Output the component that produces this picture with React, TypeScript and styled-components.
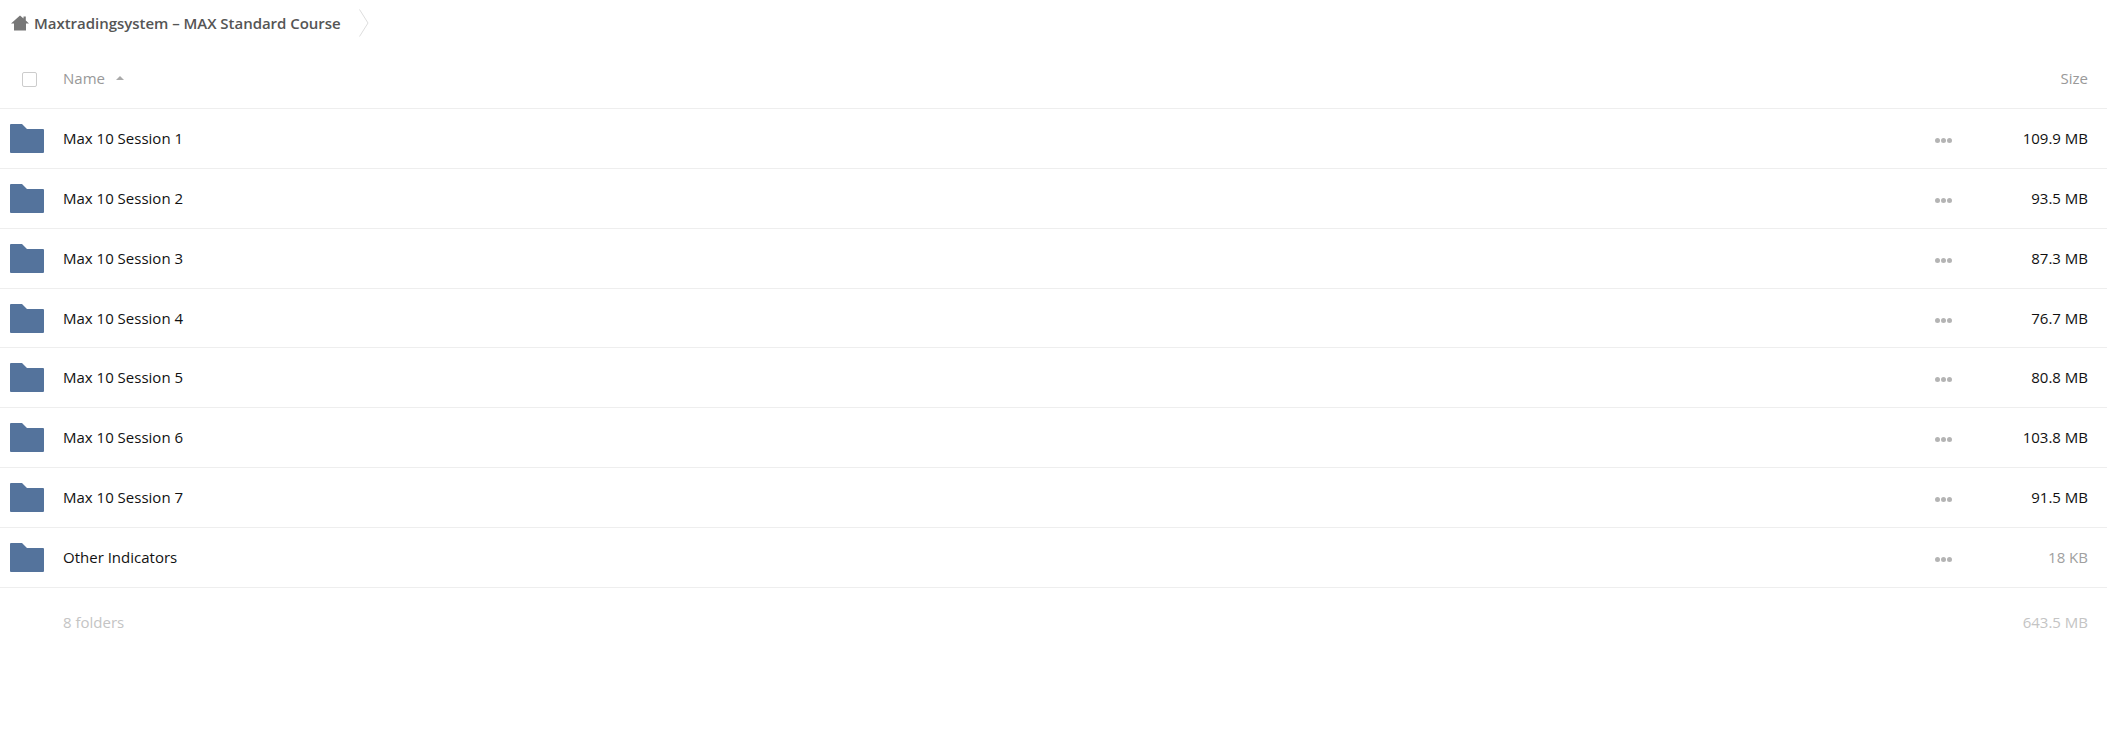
import styled, { createGlobalStyle } from "styled-components";

const rows = [
  { name: "Max 10 Session 1", size: "109.9 MB" },
  { name: "Max 10 Session 2", size: "93.5 MB" },
  { name: "Max 10 Session 3", size: "87.3 MB" },
  { name: "Max 10 Session 4", size: "76.7 MB" },
  { name: "Max 10 Session 5", size: "80.8 MB" },
  { name: "Max 10 Session 6", size: "103.8 MB" },
  { name: "Max 10 Session 7", size: "91.5 MB" },
  { name: "Other Indicators", size: "18 KB", faint: true },
];

const FolderIcon = () => (
  <FolderSvg viewBox="0 0 34 29">
    <path d="M0 1 Q0 0 1 0 H12 L17 5 H33 Q34 5 34 6 V28 Q34 29 33 29 H1 Q0 29 0 28 Z" fill="#54739c" />
  </FolderSvg>
);

const App = () => (
  <Page>
    <GlobalStyle />
    <Breadcrumb>
      <HomeIcon viewBox="0 0 18 16">
        <path d="M9 0.5 L12.5 3.6 V1.5 H14.8 V5.6 L18 8.5 H15 V15.5 H3 V8.5 H0 Z" fill="#777" />
      </HomeIcon>
      <Crumb>Maxtradingsystem – MAX Standard Course</Crumb>
      <Chevron viewBox="0 0 10 28">
        <path d="M0.5 0.5 L9 14 L0.5 27.5" fill="none" stroke="#ddd" strokeWidth="1" />
      </Chevron>
    </Breadcrumb>
    <Header>
      <CheckCell>
        <Checkbox />
      </CheckCell>
      <HeaderName>
        Name
        <SortArrow />
      </HeaderName>
      <HeaderSize>Size</HeaderSize>
    </Header>
    {rows.map((row) => (
      <Row key={row.name}>
        <IconCell>
          <FolderIcon />
        </IconCell>
        <Name>{row.name}</Name>
        <Dots>
          <Dot />
          <Dot />
          <Dot />
        </Dots>
        <Size $faint={row.faint}>{row.size}</Size>
      </Row>
    ))}
    <Summary>
      <SummaryText>8 folders</SummaryText>
      <SummaryText>643.5 MB</SummaryText>
    </Summary>
  </Page>
);

export default App;

const GlobalStyle = createGlobalStyle`
  body {
    margin: 0;
    background: #fff;
    font-family: "Open Sans", "Liberation Sans", sans-serif;
    font-size: 15px;
    color: #000;
  }
`;

const Page = styled.main`
  width: 2107px;
  height: 729px;
  overflow: hidden;
`;

const Breadcrumb = styled.nav`
  display: flex;
  align-items: center;
  height: 46px;
  padding: 0 0 0 11px;
  box-sizing: border-box;
`;

const HomeIcon = styled.svg`
  width: 18px;
  height: 16px;
  margin-right: 5px;
`;

const Crumb = styled.span`
  font-size: 15px;
  font-weight: 600;
  letter-spacing: -0.03px;
  color: #555;
`;

const Chevron = styled.svg`
  width: 10px;
  height: 28px;
  margin-left: 18px;
`;

const Header = styled.div`
  display: flex;
  align-items: center;
  height: 62px;
  border-bottom: 1px solid #eee;
`;

const CheckCell = styled.div`
  display: flex;
  align-items: center;
  width: 63px;
  padding: 4px 0 0 22px;
  box-sizing: border-box;
`;

const Checkbox = styled.div`
  width: 15px;
  height: 15px;
  border: 1px solid #ccc;
  border-radius: 2px;
  box-sizing: border-box;
`;

const HeaderName = styled.div`
  display: flex;
  align-items: center;
  flex: 1;
  padding-top: 1px;
  color: #999;
`;

const SortArrow = styled.span`
  width: 0;
  height: 0;
  margin-left: 11px;
  border-left: 4px solid transparent;
  border-right: 4px solid transparent;
  border-bottom: 4px solid #aaa;
`;

const HeaderSize = styled.div`
  padding: 1px 19px 0 0;
  color: #999;
`;

const Row = styled.div`
  display: flex;
  align-items: center;
  height: 58.86px;
  border-bottom: 1px solid #eee;
`;

const IconCell = styled.div`
  display: flex;
  width: 63px;
  padding-left: 10px;
  box-sizing: border-box;
`;

const FolderSvg = styled.svg`
  width: 34px;
  height: 29px;
`;

const Name = styled.div`
  flex: 1;
  padding-bottom: 1px;
  color: #111;
`;

const Dots = styled.div`
  display: flex;
  gap: 1px;
  padding-top: 4px;
`;

const Dot = styled.span`
  width: 5px;
  height: 5px;
  border-radius: 50%;
  background: #b4b4b4;
`;

const Size = styled.div<{ $faint?: boolean }>`
  width: 155px;
  padding: 0 19px 1px 0;
  box-sizing: border-box;
  text-align: right;
  color: ${(p) => (p.$faint ? "#a0a0a0" : "#111")};
`;

const Summary = styled.div`
  display: flex;
  justify-content: space-between;
  align-items: center;
  height: 68px;
  padding: 0 19px 0 63px;
`;

const SummaryText = styled.span`
  color: #c4c4c4;
`;
